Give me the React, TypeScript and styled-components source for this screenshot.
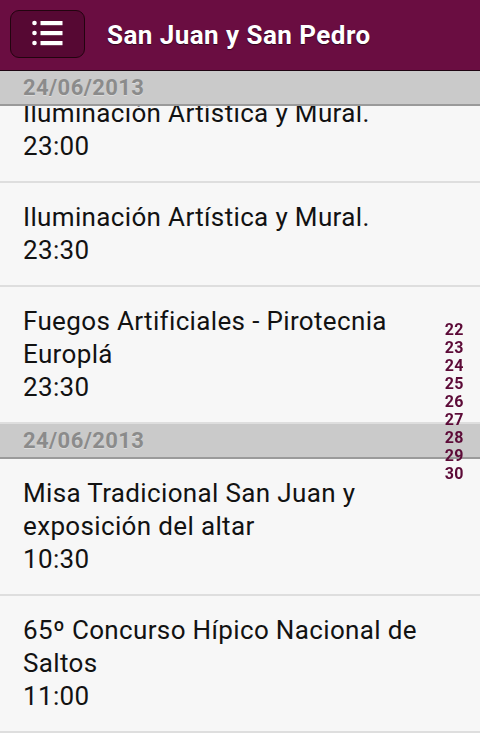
import React, { useLayoutEffect, useRef } from "react";
import styled, { createGlobalStyle } from "styled-components";

const GlobalStyle = createGlobalStyle`
  html, body {
    margin: 0;
    padding: 0;
    height: 100%;
    background: #f7f7f7;
    font-family: Roboto, "Noto Sans", "Liberation Sans", sans-serif;
  }
  #root {
    height: 100%;
  }
`;

const Screen = styled.div`
  display: flex;
  flex-direction: column;
  height: 100vh;
  position: relative;
  overflow: hidden;
`;

const ActionBar = styled.header`
  flex: 0 0 auto;
  display: flex;
  align-items: center;
  height: 70px;
  padding: 0 10px;
  background: #6a0d41;
  border-bottom: 1px solid #1e0512;
`;

const MenuButton = styled.button`
  display: flex;
  align-items: center;
  justify-content: center;
  width: 75px;
  height: 48px;
  margin-top: -2px;
  padding: 0;
  background: #560833;
  border: 1px solid #22040f;
  border-radius: 9px;
  cursor: pointer;
`;

const Title = styled.h1`
  margin: 0 0 0 22px;
  color: #ffffff;
  font-size: 26px;
  font-weight: 700;
  letter-spacing: 0.45px;
  text-shadow: 0 1px 1px rgba(0, 0, 0, 0.55);
`;

const List = styled.div`
  flex: 1 1 auto;
  overflow-y: auto;
  scrollbar-width: none;
  &::-webkit-scrollbar {
    display: none;
  }
`;

const Section = styled.section``;

const SectionHeader = styled.div`
  position: sticky;
  top: 0;
  z-index: 2;
  height: 33px;
  display: flex;
  align-items: center;
  padding: 0 23px;
  background: #cacaca;
  border-bottom: 2px solid #9a9a9a;
  color: #8b8b8b;
  font-size: 22px;
  font-weight: 700;
  letter-spacing: 0.4px;
  text-shadow: 0 1px 0 rgba(255, 255, 255, 0.35);
`;

const Row = styled.div`
  padding: 18px 23px;
  border-bottom: 2px solid #dedede;
  color: #121212;
  font-size: 26px;
  line-height: 33px;
  letter-spacing: 0.35px;
`;

const RowLine = styled.div``;

const IndexBar = styled.nav`
  position: absolute;
  right: 16px;
  top: 71px;
  bottom: 0;
  z-index: 3;
  display: flex;
  flex-direction: column;
  justify-content: center;
  align-items: center;
`;

const IndexItem = styled.span`
  color: #5c0a37;
  font-size: 16px;
  font-weight: 700;
  line-height: 18px;
  letter-spacing: 0.5px;
`;

const MenuIcon: React.FC = () => (
  <svg width="32" height="28" viewBox="0 0 32 28">
    <circle cx="2.5" cy="3" r="2.3" fill="#fff" />
    <circle cx="2.5" cy="13" r="2.3" fill="#fff" />
    <circle cx="2.5" cy="23" r="2.3" fill="#fff" />
    <rect x="8.5" y="1" width="22" height="4.2" fill="#fff" />
    <rect x="8.5" y="11" width="22" height="4.2" fill="#fff" />
    <rect x="8.5" y="21" width="22" height="4.2" fill="#fff" />
  </svg>
);

type Event = { title: string; time: string };
type Day = { date: string; events: Event[] };

const days: Day[] = [
  {
    date: "24/06/2013",
    events: [
      { title: "Iluminación Artística y Mural.", time: "23:00" },
      { title: "Iluminación Artística y Mural.", time: "23:30" },
      { title: "Fuegos Artificiales - Pirotecnia Europlá", time: "23:30" },
    ],
  },
  {
    date: "24/06/2013",
    events: [
      { title: "Misa Tradicional San Juan y exposición del altar", time: "10:30" },
      { title: "65º Concurso Hípico Nacional de Saltos", time: "11:00" },
      { title: "Gigantes y Cabezudos", time: "12:00" },
    ],
  },
];

const indexDays = ["22", "23", "24", "25", "26", "27", "28", "29", "30"];

const App: React.FC = () => {
  const listRef = useRef<HTMLDivElement>(null);

  // the list is shown already scrolled a little, first row under the sticky date
  useLayoutEffect(() => {
    if (listRef.current) listRef.current.scrollTop = 27;
  }, []);

  return (
    <Screen>
      <GlobalStyle />
      <ActionBar>
        <MenuButton aria-label="Menú">
          <MenuIcon />
        </MenuButton>
        <Title>San Juan y San Pedro</Title>
      </ActionBar>
      <List ref={listRef}>
        {days.map((day, i) => (
          <Section key={i}>
            <SectionHeader>{day.date}</SectionHeader>
            {day.events.map((ev, j) => (
              <Row key={j}>
                <RowLine>{ev.title}</RowLine>
                <RowLine>{ev.time}</RowLine>
              </Row>
            ))}
          </Section>
        ))}
      </List>
      <IndexBar>
        {indexDays.map((d) => (
          <IndexItem key={d}>{d}</IndexItem>
        ))}
      </IndexBar>
    </Screen>
  );
};

export default App;
